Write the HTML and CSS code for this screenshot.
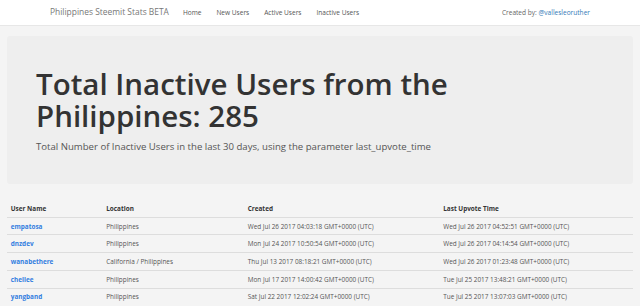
FILE: index.html
```html
<!DOCTYPE html>
<html>
<head>
  <meta charset="UTF-8">
  <title>Philippines Steemit Stats BETA</title>
  <link rel="stylesheet" href="styles.css">
</head>
<body>
  <nav class="navbar">
    <div class="nav-inner">
      <a class="brand" href="#">Philippines Steemit Stats BETA</a>
      <ul class="nav-links">
        <li><a href="#">Home</a></li>
        <li><a href="#">New Users</a></li>
        <li><a href="#">Active Users</a></li>
        <li><a href="#">Inactive Users</a></li>
      </ul>
      <p class="nav-text">Created by: <a href="#">@vallesleoruther</a></p>
    </div>
  </nav>
  <div class="page">
    <div class="jumbotron">
      <h1>Total Inactive Users from the Philippines: 285</h1>
      <p>Total Number of Inactive Users in the last 30 days, using the parameter last_upvote_time</p>
    </div>
    <table class="users">
      <thead>
        <tr>
          <th class="c-name">User Name</th>
          <th class="c-loc">Location</th>
          <th class="c-created">Created</th>
          <th>Last Upvote Time</th>
        </tr>
      </thead>
      <tbody>
        <tr>
          <td><a href="#">empatosa</a></td>
          <td>Philippines</td>
          <td>Wed Jul 26 2017 04:03:18 GMT+0000 (UTC)</td>
          <td>Wed Jul 26 2017 04:52:51 GMT+0000 (UTC)</td>
        </tr>
        <tr>
          <td><a href="#">dnzdev</a></td>
          <td>Philippines</td>
          <td>Mon Jul 24 2017 10:50:54 GMT+0000 (UTC)</td>
          <td>Wed Jul 26 2017 04:14:54 GMT+0000 (UTC)</td>
        </tr>
        <tr>
          <td><a href="#">wanabethere</a></td>
          <td>California / Philippines</td>
          <td>Thu Jul 13 2017 08:18:21 GMT+0000 (UTC)</td>
          <td>Wed Jul 26 2017 01:23:48 GMT+0000 (UTC)</td>
        </tr>
        <tr>
          <td><a href="#">chellee</a></td>
          <td>Philippines</td>
          <td>Mon Jul 17 2017 14:00:42 GMT+0000 (UTC)</td>
          <td>Tue Jul 25 2017 13:48:21 GMT+0000 (UTC)</td>
        </tr>
        <tr>
          <td><a href="#">yangband</a></td>
          <td>Philippines</td>
          <td>Sat Jul 22 2017 12:02:24 GMT+0000 (UTC)</td>
          <td>Tue Jul 25 2017 13:07:03 GMT+0000 (UTC)</td>
        </tr>
      </tbody>
    </table>
  </div>
</body>
</html>
```

FILE: styles.css
```css
body{margin:0;background-color:#f4f4f4;font-family:"Open Sans",Arial,sans-serif;color:#333;font-size:6.4px;line-height:1.42857}
a{text-decoration:none}
.navbar{background-color:#fff;border-bottom:1px solid #e7e7e7;height:25px;margin-bottom:10px}
.nav-inner{display:flex;align-items:center;height:100%;padding-left:50px;padding-right:50px}
.brand{color:#777;font-size:8.43px;margin-right:14px}
.nav-links{display:flex;list-style:none;margin:0;padding:0;gap:15px;font-size:6.56px}
.nav-links a{color:#555}
.nav-text{margin:0 0 0 auto;color:#666;font-size:6.56px}
.nav-text a{color:#337ab7}
.page{padding:0 7px}
.jumbotron{background-color:#eee;border-radius:3px;padding:22.5px 28px 21px 29px;margin-bottom:16px}
.jumbotron h1{font-size:29.5px;font-weight:600;line-height:1.1;margin:9.4px 0 7.5px;color:#333}
.jumbotron p{font-size:9.6px;color:#555;margin:0 0 9px}
.users{width:100%;border-collapse:collapse}
.users th,.users td{text-align:left;padding:3.8px 3.75px;border-top:1px solid #ddd;vertical-align:top}
.users th{font-weight:700;color:#333;border-top:0;border-bottom:1px solid #ddd}
.users td{color:#555}
.users td a{color:#337ee0;font-weight:700}
.c-name{width:88px}
.c-loc{width:134px}
.c-created{width:188px}
```
